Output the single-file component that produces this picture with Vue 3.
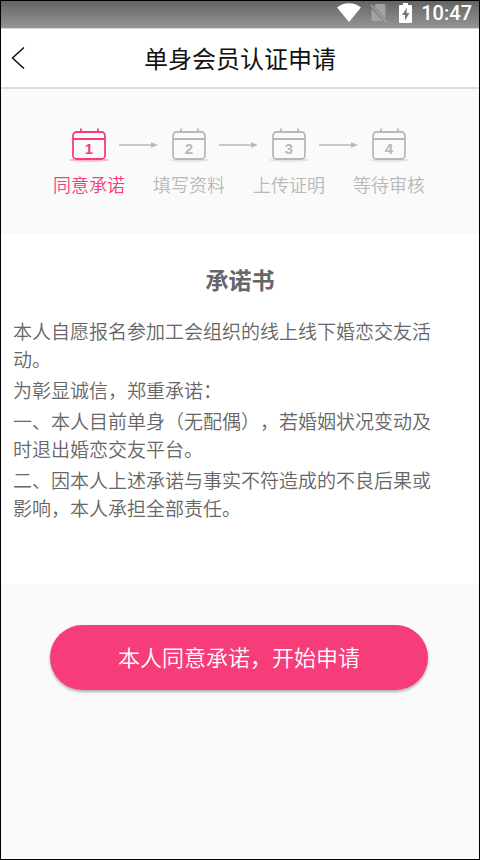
<template>
  <div class="screen">
    <div class="status-bar">
      <svg class="wifi" viewBox="0 0 24 19" aria-hidden="true">
        <path d="M0 4.5C6.5-1.2 17.5-1.2 24 4.5L12 19z" fill="#fff" />
      </svg>
      <svg class="sim" viewBox="0 0 18 20" aria-hidden="true">
        <path d="M6 1h8q1.500 0 1.500 1.500v13.500L4 3zM1.500 5.500L13 18H3q-1.500 0-1.500-1.500z" fill="#a2a2a2" />
        <path d="M1 2l15.500 17" stroke="#a2a2a2" stroke-width="1.500" />
      </svg>
      <svg class="battery" viewBox="0 0 13 20" aria-hidden="true">
        <path d="M4 0h5v2h3q1 0 1 1v16q0 1-1 1H1q-1 0-1-1V3q0-1 1-1h3z" fill="#fff" />
        <path d="M8 4.500L3 12h3v5.500l4.500-7.500H7.500z" fill="#777" />
      </svg>
      <time>10:47</time>
    </div>

    <header class="nav">
      <button class="back" type="button" aria-label="返回">
        <svg viewBox="0 0 14 22" aria-hidden="true">
          <path d="M13 0.500L1.500 11 13 21.500" fill="none" stroke="#111" stroke-width="1.500" />
        </svg>
      </button>
      <h1>单身会员认证申请</h1>
    </header>

    <main>
      <ol class="steps">
        <li
          v-for="(step, index) in steps"
          :key="step"
          :class="{ active: index === current }"
          :aria-current="index === current ? 'step' : undefined"
        >
          <div class="marker">
            <svg class="calendar" viewBox="0 0 40 34" aria-hidden="true">
              <ellipse class="shadow" cx="20" cy="32" rx="20" ry="1.800" />
              <rect x="4" y="4" width="32" height="27" rx="3.500" />
              <path d="M4 11h32M12 0.500V4M29 0.500V4" />
              <text x="20" y="26" text-anchor="middle">{{ index + 1 }}</text>
            </svg>
            <svg v-if="index < steps.length - 1" class="arrow" viewBox="0 0 39 6" aria-hidden="true">
              <path d="M0 3h34" stroke="#b8b8b8" stroke-width="1.500" />
              <path d="M32 0.300L39 3 32 5.700z" fill="#b8b8b8" />
            </svg>
          </div>
          <span class="label">{{ step }}</span>
        </li>
      </ol>

      <section class="pledge">
        <h2>承诺书</h2>
        <p v-for="text in paragraphs" :key="text">{{ text }}</p>
      </section>

      <div class="actions">
        <button class="submit" type="button">本人同意承诺，开始申请</button>
      </div>
    </main>
  </div>
</template>

<script setup>
import { ref } from 'vue'

const current = ref(0)

const steps = ['同意承诺', '填写资料', '上传证明', '等待审核']

const paragraphs = [
  '本人自愿报名参加工会组织的线上线下婚恋交友活动。',
  '为彰显诚信，郑重承诺：',
  '一、本人目前单身（无配偶），若婚姻状况变动及时退出婚恋交友平台。',
  '二、因本人上述承诺与事实不符造成的不良后果或影响，本人承担全部责任。',
]
</script>

<style>
body {
  margin: 0;
  background: #fafafa;
}
</style>

<style scoped>
* {
  box-sizing: border-box;
}

.screen {
  min-height: 100vh;
  border: 1px solid #000;
  background: #fafafa;
  color: #666;
  font-family: 'Noto Sans CJK SC', sans-serif;
  font-weight: 350;
  text-spacing-trim: space-all;
}

h1,
h2,
p,
ol {
  margin: 0;
  padding: 0;
}

button {
  border: 0;
  padding: 0;
  font-family: inherit;
  font-weight: inherit;
  cursor: pointer;
}

svg {
  display: block;
  flex: none;
}

/* Status bar */
.status-bar {
  display: flex;
  justify-content: flex-end;
  align-items: center;
  height: 28px;
  padding: 0 7px 4px 0;
  border-bottom: 1px solid #d8d8d8;
  background: linear-gradient(#646464, #959595);
}

.wifi {
  width: 24px;
  height: 19px;
}

.sim {
  width: 18px;
  height: 20px;
  margin-left: 9px;
}

.battery {
  width: 13px;
  height: 20px;
  margin-left: 11px;
}

time {
  margin-left: 9px;
  color: #fff;
  font: 500 20px/22px Roboto, sans-serif;
}

/* Title bar */
.nav {
  display: grid;
  grid-template-columns: 40px 1fr 40px;
  align-items: center;
  height: 60px;
  border-bottom: 2px solid #dcdcdc;
  background: #fff;
}

.back {
  height: 40px;
  padding-left: 10px;
  background: none;
}

.back svg {
  width: 14px;
  height: 22px;
}

h1 {
  color: #111;
  font-size: 24px;
  font-weight: 400;
  line-height: 36px;
  text-align: center;
}

/* Steps */
.steps {
  display: flex;
  padding: 39px 40px 36px 38px;
  list-style: none;
}

.steps li {
  flex: 1;
  min-width: 0;
  color: #b8b8b8;
}

.steps .active {
  color: #f63d79;
}

.marker {
  display: grid;
  grid-template-columns: minmax(0, 1fr) 40px minmax(0, 1fr);
  align-items: center;
}

.calendar {
  grid-column: 2;
  width: 40px;
  height: 34px;
  fill: none;
  stroke: currentColor;
  stroke-width: 1.8px;
}

.calendar .shadow {
  fill: currentColor;
  stroke: none;
  opacity: 0.35;
}

.calendar text {
  fill: currentColor;
  stroke: none;
  font: bold 15px 'Liberation Sans', sans-serif;
}

.arrow {
  width: 39px;
  height: 6px;
  margin-left: 10px;
}

.label {
  display: block;
  margin-top: 8px;
  font-size: 18px;
  line-height: 28px;
  text-align: center;
  white-space: nowrap;
}

/* Pledge text */
.pledge {
  min-height: 350px;
  padding: 27px 40px 40px 12px;
  background: #fff;
}

h2 {
  margin: 0 -28px 20px 0;
  font-size: 23px;
  font-weight: 700;
  line-height: 36px;
  text-align: center;
}

p {
  margin-bottom: 3px;
  font-size: 19px;
  line-height: 28px;
}

/* Submit */
.actions {
  padding: 41px 51px 41px 49px;
}

.submit {
  width: 100%;
  height: 65px;
  padding-bottom: 4px;
  border-radius: 33px;
  background: #f63d79;
  box-shadow: 0 2px 3px rgba(0, 0, 0, 0.3);
  color: #fff;
  font-size: 22px;
}
</style>
